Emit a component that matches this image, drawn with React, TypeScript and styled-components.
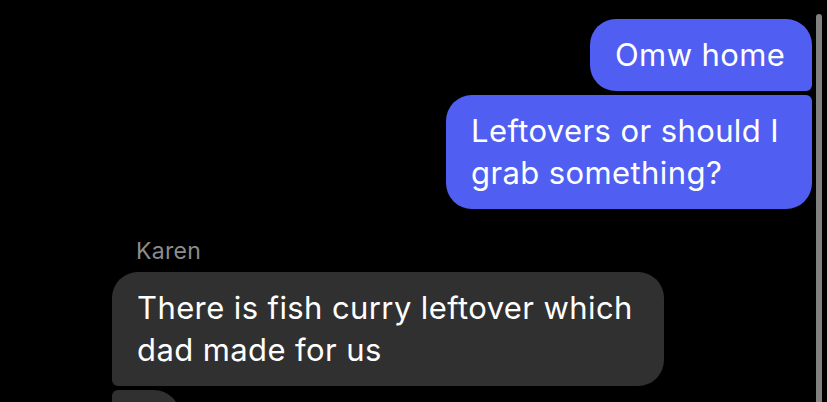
import React from "react";
import styled, { createGlobalStyle, css } from "styled-components";

const GlobalStyle = createGlobalStyle`
  html, body {
    margin: 0;
    padding: 0;
    background: #000;
    height: 402px;
    overflow: hidden;
  }
  body {
    font-family: Inter, "Noto Sans", "Liberation Sans", sans-serif;
    -webkit-font-smoothing: antialiased;
  }
`;

const Screen = styled.div`
  display: flex;
  height: 402px;
  background: #000;
  overflow: hidden;
`;

const Thread = styled.div`
  flex: 1;
  display: flex;
  flex-direction: column;
  padding: 19px 4px 0 112px;
  min-width: 0;
`;

const Group = styled.div<{ $mine?: boolean }>`
  display: flex;
  flex-direction: column;
  align-items: ${(p) => (p.$mine ? "flex-end" : "flex-start")};
  gap: 4px;
  margin-bottom: 28px;
`;

const Sender = styled.div`
  color: #8c8c8e;
  font-size: 23px;
  line-height: 28px;
  padding-left: 24px;
  margin-bottom: 3px;
  letter-spacing: 0.3px;
`;

type Corner = "first" | "middle" | "last" | "single";

const Bubble = styled.div<{ $mine?: boolean; $pos: Corner }>`
  box-sizing: border-box;
  padding: 15px 24px 15px 25px;
  font-size: 31px;
  line-height: 42px;
  color: #fff;
  letter-spacing: 0.4px;
  background: ${(p) => (p.$mine ? "#505ff1" : "#303030")};
  border-radius: 26px;
  ${(p) =>
    p.$mine
      ? css`
          ${(p.$pos === "first" || p.$pos === "middle") && "border-bottom-right-radius: 6px;"}
          ${(p.$pos === "last" || p.$pos === "middle") && "border-top-right-radius: 6px;"}
        `
      : css`
          ${(p.$pos === "first" || p.$pos === "middle") && "border-bottom-left-radius: 6px;"}
          ${(p.$pos === "last" || p.$pos === "middle") && "border-top-left-radius: 6px;"}
        `}
`;

const Line = styled.span`
  display: block;
  white-space: nowrap;
`;

const ScrollTrack = styled.div`
  width: 11px;
  padding-top: 14px;
  display: flex;
  flex-direction: column;
`;

const ScrollThumb = styled.div`
  width: 6px;
  flex: 1;
  background: #818181;
  border-radius: 3px 3px 0 0;
`;

type Msg = { lines: string[]; width?: number };

const mine: Msg[] = [
  { lines: ["Omw home"], width: 222 },
  { lines: ["Leftovers or should I", "grab something?"], width: 366 },
];

const theirs: Msg[] = [
  { lines: ["There is fish curry leftover which", "dad made for us"], width: 552 },
  { lines: ["k"], width: 68 },
];

const posOf = (i: number, n: number): Corner =>
  n === 1 ? "single" : i === 0 ? "first" : i === n - 1 ? "last" : "middle";

export default function App() {
  return (
    <>
      <GlobalStyle />
      <Screen>
        <Thread>
          <Group $mine>
            {mine.map((m, i) => (
              <Bubble key={i} $mine $pos={posOf(i, mine.length)} style={{ width: m.width }}>
                {m.lines.map((l) => (
                  <Line key={l}>{l}</Line>
                ))}
              </Bubble>
            ))}
          </Group>
          <Group>
            <Sender>Karen</Sender>
            {theirs.map((m, i) => (
              <Bubble key={i} $pos={posOf(i, theirs.length)} style={{ width: m.width }}>
                {m.lines.map((l) => (
                  <Line key={l}>{l}</Line>
                ))}
              </Bubble>
            ))}
          </Group>
        </Thread>
        <ScrollTrack>
          <ScrollThumb />
        </ScrollTrack>
      </Screen>
    </>
  );
}
